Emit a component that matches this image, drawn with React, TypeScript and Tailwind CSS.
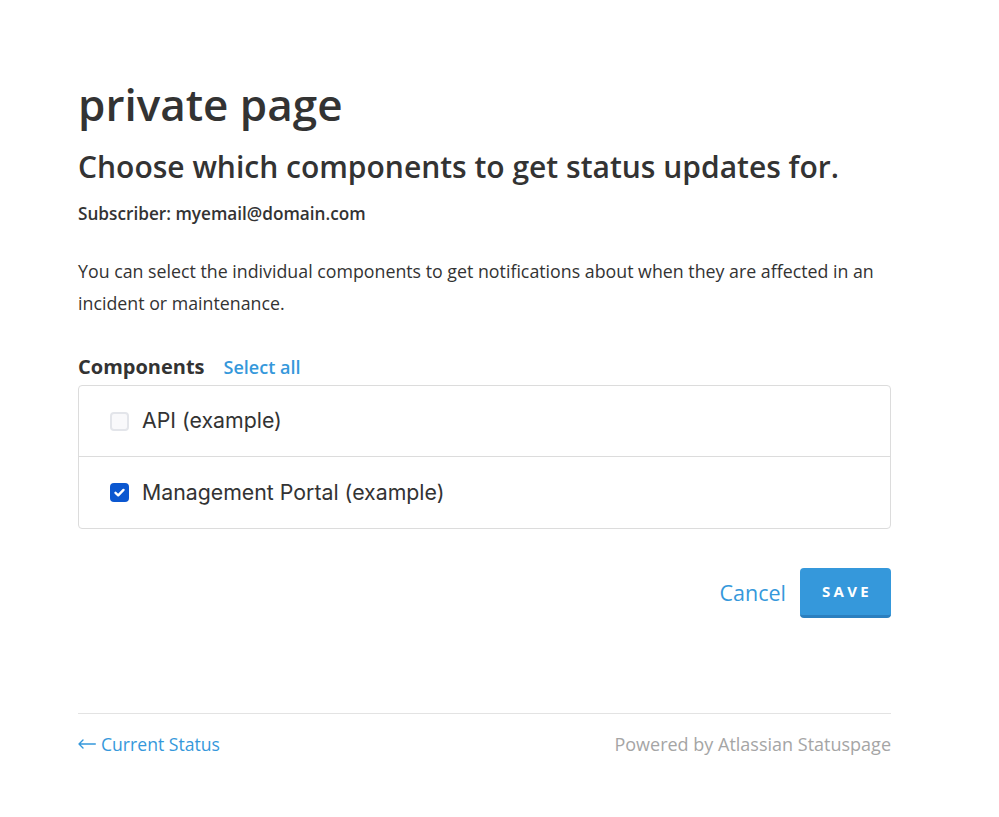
export default function App() {
  return (
    <div className="min-h-[817px] bg-white font-['Open_Sans','Noto_Sans',sans-serif] text-[#333333]">
      <div className="ml-[78px] w-[813px] pt-[76px]">
        <h1 className="text-[44px] font-semibold leading-[56px]">private page</h1>
        <h2 className="mt-[15px] text-[30px] font-semibold leading-[40px]">
          Choose which components to get status updates for.
        </h2>
        <p className="mt-[15px] text-[17.2px] font-semibold leading-[24px]">Subscriber: myemail@domain.com</p>
        <p className="mt-[29px] text-[17.8px] leading-[32px]">
          You can select the individual components to get notifications about when they are affected in an
          incident or maintenance.
        </p>

        <div className="mt-[33px] flex items-baseline gap-[19px]">
          <span className="text-[20px] font-bold">Components</span>
          <button className="text-[18px] font-semibold text-[#3598db]">Select all</button>
        </div>

        <div className="mt-[3px] rounded-[4px] border border-[#dcdcdc]">
          <label className="flex h-[71px] items-center gap-[13px] border-b border-[#dcdcdc] pl-[31px] font-['Inter',sans-serif] text-[21.3px]">
            <span className="h-[19px] w-[19px] rounded-[4px] border-2 border-[#e3e5ea] bg-[#f9f9fb]" />
            API (example)
          </label>
          <label className="flex h-[71px] items-center gap-[13px] pl-[31px] font-['Inter',sans-serif] text-[21.3px]">
            <span className="flex h-[19px] w-[19px] items-center justify-center rounded-[4px] bg-[#0b57d0]">
              <svg viewBox="0 0 12 12" className="h-[13px] w-[13px]" fill="none" stroke="white" strokeWidth="2.2" strokeLinecap="round" strokeLinejoin="round">
                <path d="M2.3 6.3 4.8 8.6 9.7 3.6" />
              </svg>
            </span>
            Management Portal (example)
          </label>
        </div>

        <div className="mt-[39px] flex items-center justify-end gap-[14px]">
          <button className="text-[21.5px] text-[#3598db]">Cancel</button>
          <button className="h-[50px] w-[91px] rounded-[4px] border-b-[3px] border-[#2b7fbf] bg-[#3598db] pl-[3px] text-[15px] font-bold tracking-[0.22em] text-white">
            SAVE
          </button>
        </div>

        <div className="mt-[95px] border-t border-[#e3e3e3] pt-[18px]">
          <div className="flex items-center justify-between text-[18px] leading-[24px]">
            <a className="flex items-center gap-[5px] text-[#3598db]">
              <svg viewBox="0 0 18 10" className="h-[10px] w-[18px]" fill="none" stroke="currentColor" strokeWidth="1.4" strokeLinecap="round" strokeLinejoin="round">
                <path d="M17.3 5H1M5 1 1 5l4 4" />
              </svg>
              <span className="text-[17.6px]">Current Status</span>
            </a>
            <span className="text-[#a5a5a5]">Powered by Atlassian Statuspage</span>
          </div>
        </div>
      </div>
    </div>
  );
}
